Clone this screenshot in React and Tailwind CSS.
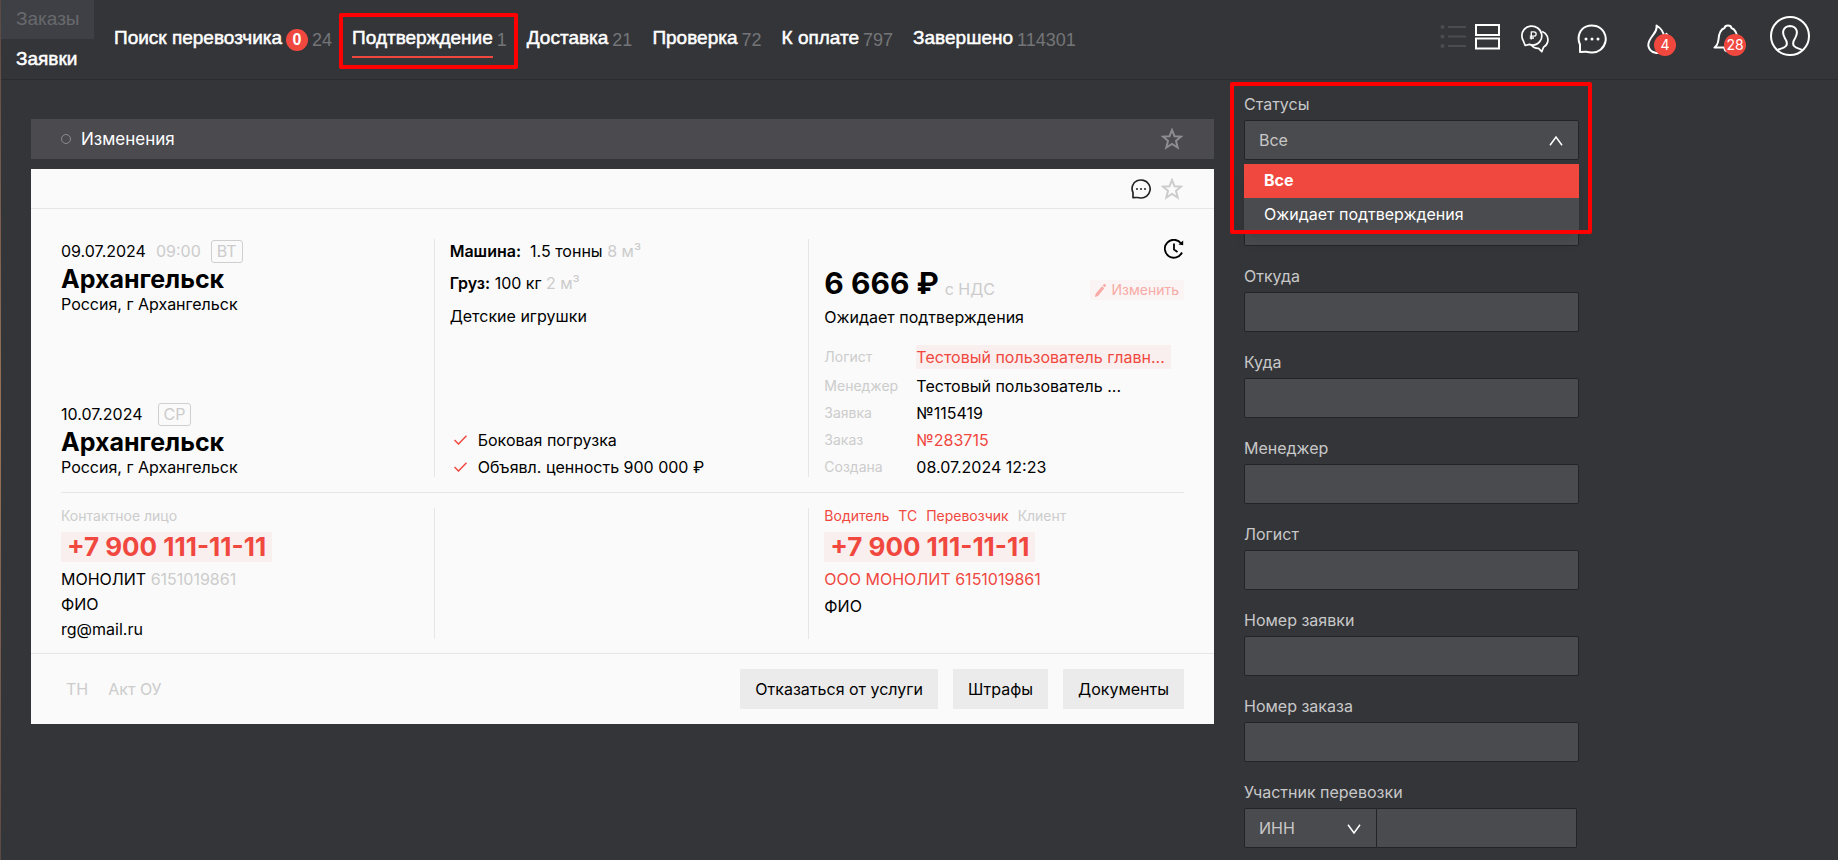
import React, { useState } from 'react';

const TABS = [
  { name: 'Поиск перевозчика', badge: 0, count: 24 },
  { name: 'Подтверждение', count: 1, active: true },
  { name: 'Доставка', count: 21 },
  { name: 'Проверка', count: 72 },
  { name: 'К оплате', count: 797 },
  { name: 'Завершено', count: 114301 },
];

const STATUSES = ['Все', 'Ожидает подтверждения'];

const FIELDS = [
  { id: 'from', label: 'Откуда' },
  { id: 'to', label: 'Куда' },
  { id: 'manager', label: 'Менеджер' },
  { id: 'logist', label: 'Логист' },
  { id: 'request', label: 'Номер заявки' },
  { id: 'order', label: 'Номер заказа' },
];

const inputClass = 'block h-10 w-full rounded-xs border border-[#232426] bg-[#4a4b4e] px-[14px] text-base text-[#c8c8c8] outline-none';
const labelClass = 'mb-1 block h-6 text-base leading-6 text-[#c8c8c8]';

function ListIcon() {
  return (
    <svg width="26" height="26" viewBox="0 0 26 26" fill="none" stroke="#4b4c50" strokeWidth="2">
      <path d="M8 3h18M8 12.500h18M8 22h18" />
      <g fill="#4b4c50" stroke="none">
        <circle cx="2.500" cy="3" r="2" />
        <circle cx="2.500" cy="12.500" r="2" />
        <circle cx="2.500" cy="22" r="2" />
      </g>
    </svg>
  );
}

function RowsIcon() {
  return (
    <svg width="25" height="26" viewBox="0 0 25 26" fill="none" stroke="#fff" strokeWidth="2">
      <path d="M1 1h23v10H1zM1 14.500h23v10H1z" />
    </svg>
  );
}

function RubleChatIcon() {
  return (
    <svg width="28" height="28" viewBox="0 0 28 28" fill="none" stroke="#fff" strokeWidth="1.700" strokeLinejoin="round">
      <path d="M2.300 15.700C.2 12.600.4 7.800 3 4.600 6.200.7 12.500-.1 16.700 3c4.600 3.300 5.300 9.500 2.200 13.400-2.600 3.300-6.700 4.300-10.400 3l-4.300 1.100z" />
      <path d="M21.200 6.500c4.200 1.600 6.500 5.900 5.500 10.300-.5 2.300-2.200 4.300-4.200 5.400l-1.700 4.400-3.200-3.300c-3.300.1-5.800-1.300-7.500-3.600" />
      <path d="M10.300 14.500V6.800h2.600c3 0 3 4.300 0 4.300H8.800M8.800 13h4.200" strokeWidth="1.300" />
    </svg>
  );
}

function ChatIcon({ size, width }) {
  return (
    <svg width={size} height={size} viewBox="0 0 30 30" fill="none" stroke="currentColor" strokeWidth={width} strokeLinejoin="round">
      <path d="M3 28V20.500C-.5 13 3 5 9 2.600 15.500 0 23 2 26.800 8c3.600 6 2 13.600-3.300 17.700-3.200 2.400-6.500 3-9 2.800-2.500 0-4.500-.5-6-.8z" />
      <g fill="currentColor" stroke="none">
        <circle cx="9" cy="15" r="1.500" />
        <circle cx="15" cy="15" r="1.500" />
        <circle cx="21" cy="15" r="1.500" />
      </g>
    </svg>
  );
}

function FireIcon() {
  return (
    <svg width="26" height="30" viewBox="0 0 26 30" fill="none" stroke="#fff" strokeWidth="2" strokeLinejoin="round">
      <path d="M9.500 1.500c1 5-2 7.500-4.500 11-2.500 3.300-4.300 6.500-3.500 10 .7 3 3 5.500 7 6.300 7 1.300 14-3 14-9.500 0-3.500-1-7-3-9.500l-2.500 4c.2-5-3-9.500-7.500-12.300z" />
    </svg>
  );
}

function BellIcon() {
  return (
    <svg width="30" height="30" viewBox="0 0 30 30" fill="none" stroke="#fff" strokeWidth="2" strokeLinejoin="round">
      <path d="M1.500 23.500c3-2 3.500-4 4-8C6 8.500 7.500 5.500 11.500 4c.5-3.500 6.500-3.500 7 0 4 1.500 5.500 4.500 6 11.500.5 4 1 6 4 8zM11.500 24c0 4.500 7 4.500 7 0" />
    </svg>
  );
}

function UserIcon() {
  return (
    <svg width="40" height="40" viewBox="0 0 40 40" fill="none" stroke="#fff" strokeWidth="2">
      <circle cx="20" cy="20" r="19" />
      <path d="M7.500 34c2-1.300 6.500-1.300 8.500-4 1.700-2.300.8-5-1.200-8-3-5-2.300-11.500 5.200-12 7.500.5 8.200 7 5.200 12-2 3-2.900 5.700-1.200 8 2 2.700 6.500 2.700 8.500 4" />
    </svg>
  );
}

function StarIcon() {
  return (
    <svg width="22" height="22" viewBox="0 0 22 22" fill="none" stroke="currentColor" strokeWidth="2">
      <path d="M11 2l2.500 6.200 6.600.4-5.100 4.200 1.700 6.700L11 15.900l-5.700 3.600L7 12.800 1.900 8.600l6.600-.4z" />
    </svg>
  );
}

function HistoryIcon() {
  return (
    <svg width="20" height="20" viewBox="0 0 20 20" fill="none" stroke="#000" strokeWidth="1.800">
      <path d="M18 13.500A9 9 0 1 1 17 4.300M10 4.500v6l3.500 2.500" />
      <path d="M14.500 5.500l4.700.7V1.600z" fill="#000" stroke="none" />
    </svg>
  );
}

function PencilIcon() {
  return (
    <svg width="11" height="13" viewBox="0 0 11 13" fill="currentColor">
      <path d="M7 2.300l2.300 2L3 12l-3 1 .6-3.300zM7.700 1.500L8.700.3c.4-.4 1-.4 1.500 0l.5.5c.4.4.4 1 0 1.500l-.8 1z" />
    </svg>
  );
}

function Chevron({ up }) {
  return (
    <svg className="pointer-events-none absolute right-4 top-4" width="14" height="10" viewBox="0 0 14 10" fill="none" stroke="#fff" strokeWidth="1.500">
      <path d={up ? 'M1 9.300L7 1l6 8.300' : 'M1 .7L7 9l6-8.300'} />
    </svg>
  );
}

function Check({ children }) {
  return (
    <li className="flex items-center gap-[11px] pl-1 leading-5">
      <svg width="13" height="10" viewBox="0 0 13 10" fill="none" stroke="#f0483f" strokeWidth="1.500">
        <path d="M.5 5l4 4L12.500.7" />
      </svg>
      {children}
    </li>
  );
}

function Point({ date, time, day }) {
  return (
    <div>
      <div className="flex h-6 items-center">
        <span>{date}</span>
        {time && <span className="ml-[10px] text-[#cccccc]">{time}</span>}
        <span className={`flex h-[23px] items-center rounded-[3px] border border-[#cfcfcf] px-[5px] text-[#cccccc] ${time ? 'ml-[10px]' : 'ml-[15px]'}`}>{day}</span>
      </div>
      <h3 className="text-[25px] leading-8 font-bold">Архангельск</h3>
      <p className="leading-[19px]">Россия, г Архангельск</p>
    </div>
  );
}

function Phone() {
  return (
    <a href="tel:+79001111111" className="mt-1 block w-fit bg-[#f9efee] px-[6px] text-[26px] leading-[30px] font-bold text-[#f0483f]">
      +7 900 111-11-11
    </a>
  );
}

// outline drawn over a part of the screen to point it out
function Marker({ className }) {
  return <div className={`pointer-events-none absolute z-20 rounded-xs border-4 border-[#ff0000] ${className}`} />;
}

function Header() {
  return (
    <header className="flex h-20 items-center border-b border-[#2b2c2f] font-['Liberation_Sans',Arial,sans-serif] text-[19px]">
      <nav className="w-[93px] self-stretch">
        <a href="#orders" className="flex h-[39px] items-center bg-[#3f4045] pl-[15px] text-[#68696d]">Заказы</a>
        <a href="#requests" className="flex h-10 items-center pl-[15px] text-white [-webkit-text-stroke:0.5px_white]">Заявки</a>
      </nav>
      <nav className="flex h-full flex-1 gap-5 pl-5">
        {TABS.map((tab) => (
          <a key={tab.name} href="#tab" className="relative flex items-center gap-1 whitespace-nowrap">
            <span className={`flex h-[37px] items-center border-b-2 text-white [-webkit-text-stroke:0.5px_white] ${tab.active ? 'border-[#f0483f]' : 'border-transparent'}`}>{tab.name}</span>
            {tab.badge !== undefined && (
              <span className="flex size-[22px] items-center justify-center rounded-full bg-[#f0483f] text-base font-bold text-white">{tab.badge}</span>
            )}
            <span className="text-lg text-[#747578]">{tab.count}</span>
            {tab.active && <Marker className="-left-[13px] -right-[11px] top-[13px] h-[56px]" />}
          </a>
        ))}
      </nav>
      <div className="flex items-center pr-7 text-white">
        <button aria-label="Список" className="mr-[9px] pb-[6px]"><ListIcon /></button>
        <button aria-label="Карточки" className="mr-[21px] pb-[6px]"><RowsIcon /></button>
        <button aria-label="Ставки" className="mr-7 pb-[2px]"><RubleChatIcon /></button>
        <button aria-label="Сообщения" className="mr-10 pb-[2px]"><ChatIcon size={30} width={2} /></button>
        <button aria-label="Срочные" className="relative mr-10 pb-[2px]">
          <FireIcon />
          <span className="absolute left-[7px] top-[10px] flex size-[22px] items-center justify-center rounded-full bg-[#f0483f] font-['Inter',sans-serif] text-sm">4</span>
        </button>
        <button aria-label="Уведомления" className="relative mr-[27px] pb-[2px]">
          <BellIcon />
          <span className="absolute left-[11px] top-[10px] flex size-[22px] items-center justify-center rounded-full bg-[#f0483f] font-['Inter',sans-serif] text-sm">28</span>
        </button>
        <button aria-label="Профиль" className="pb-2"><UserIcon /></button>
      </div>
    </header>
  );
}

function Details() {
  const rows = [
    ['Логист', <a href="#logist" className="block bg-[#f9efee] pr-[6px] leading-6 text-[#f0483f]">Тестовый пользователь главн...</a>],
    ['Менеджер', 'Тестовый пользователь ...'],
    ['Заявка', '№115419'],
    ['Заказ', <a href="#order" className="text-[#f0483f]">№283715</a>],
    ['Создана', '08.07.2024 12:23'],
  ];
  return (
    <dl className="grid grid-cols-[92px_max-content] items-center gap-y-[7px] leading-5">
      {rows.map(([name, value]) => (
        <React.Fragment key={name}>
          <dt className="text-sm text-[#cccccc]">{name}</dt>
          <dd>{value}</dd>
        </React.Fragment>
      ))}
    </dl>
  );
}

function Card() {
  return (
    <article className="mt-[10px] bg-[#fafafa] text-base text-black">
      <div className="flex h-10 items-center justify-end gap-[10px] border-b border-[#e6e6e6] pr-[31px]">
        <button aria-label="Комментарии" className="text-[#222]"><ChatIcon size={20} width={2.5} /></button>
        <button aria-label="В избранное" className="text-[#cccccc]"><StarIcon /></button>
      </div>

      <div className="px-[30px]">
        <div className="grid grid-cols-[373fr_375fr_376fr] border-b border-[#e6e6e6] pt-[30px] pb-[15px]">
          <section className="flex h-[238px] flex-col justify-between">
            <Point date="09.07.2024" time="09:00" day="ВТ" />
            <Point date="10.07.2024" day="СР" />
          </section>

          <section className="flex flex-col justify-between border-l border-[#e6e6e6] pl-[15px]">
            <div>
              <p className="h-8"><b className="font-semibold">Машина:</b>&nbsp; 1.5 тонны <span className="text-[#cccccc]">8 м³</span></p>
              <p className="h-[33px]"><b className="font-semibold">Груз:</b> 100 кг <span className="text-[#cccccc]">2 м³</span></p>
              <p>Детские игрушки</p>
            </div>
            <ul className="flex flex-col gap-[7px]">
              <Check>Боковая погрузка</Check>
              <Check>Объявл. ценность 900 000 ₽</Check>
            </ul>
          </section>

          <section className="flex flex-col justify-between border-l border-[#e6e6e6] pl-[15px]">
            <div>
              <button aria-label="История" className="ml-auto block h-5"><HistoryIcon /></button>
              <div className="flex items-end">
                <span className="text-3xl leading-[48px] font-bold">6 666 ₽</span>
                <span className="ml-[6px] pb-[6px] text-[#cccccc]">с НДС</span>
                <button className="mb-[7px] ml-auto flex h-5 items-center gap-[5px] bg-[#faf5f4] px-[5px] text-sm text-[#f7aaa6]">
                  <PencilIcon />Изменить
                </button>
              </div>
              <p className="leading-5">Ожидает подтверждения</p>
            </div>
            <Details />
          </section>
        </div>

        <div className="grid grid-cols-[373fr_375fr_376fr] pt-[15px] pb-[14px]">
          <section className="h-[131px]">
            <p className="h-5 text-sm leading-4 text-[#cccccc]">Контактное лицо</p>
            <Phone />
            <p className="mt-[5px] leading-[25px]">МОНОЛИТ <span className="text-[#cccccc]">6151019861</span></p>
            <p className="leading-[25px]">ФИО</p>
            <a href="mailto:rg@mail.ru" className="leading-[25px]">rg@mail.ru</a>
          </section>
          <section className="border-l border-[#e6e6e6]" />
          <section className="border-l border-[#e6e6e6] pl-[15px]">
            <div className="flex h-5 gap-[9px] text-sm leading-4 text-[#f0483f]">
              <a href="#driver">Водитель</a>
              <a href="#vehicle">ТС</a>
              <a href="#carrier">Перевозчик</a>
              <span className="text-[#cccccc]">Клиент</span>
            </div>
            <Phone />
            <a href="#company" className="mt-[5px] block leading-[25px] text-[#f0483f]">ООО МОНОЛИТ 6151019861</a>
            <p className="mt-[2px] leading-[25px]">ФИО</p>
          </section>
        </div>
      </div>

      <footer className="flex h-[71px] items-center gap-[15px] border-t border-[#e6e6e6] px-[30px]">
        <div className="flex flex-1 gap-5 pl-[5px] text-[#cccccc]">
          <span>ТН</span>
          <span>Акт ОУ</span>
        </div>
        <button className="h-10 bg-[#ebebeb] px-[15px]">Отказаться от услуги</button>
        <button className="h-10 bg-[#ebebeb] px-[15px]">Штрафы</button>
        <button className="h-10 bg-[#ebebeb] px-[15px]">Документы</button>
      </footer>
    </article>
  );
}

function Filters() {
  const [open, setOpen] = useState(true);
  const [status, setStatus] = useState('Все');

  const pick = (value) => {
    setStatus(value);
    setOpen(false);
  };

  return (
    <form className="flex w-[335px] flex-col gap-[18px] pt-3">
      <div className="relative">
        <label htmlFor="status" className={labelClass}>Статусы</label>
        <div className="relative">
          <select
            id="status"
            value={status}
            onChange={(e) => setStatus(e.target.value)}
            onMouseDown={(e) => {
              e.preventDefault();
              setOpen(!open);
            }}
            className={`${inputClass} appearance-none`}>
            {STATUSES.map((s) => <option key={s}>{s}</option>)}
          </select>
          <Chevron up={open} />
        </div>
        {open && (
          <ul role="listbox" className="absolute inset-x-0 top-[72px] z-10 bg-[#4a4b4e] text-base text-white shadow-lg">
            {STATUSES.map((s) => (
              <li
                key={s}
                role="option"
                aria-selected={s === status}
                onClick={() => pick(s)}
                className={`h-[34px] px-5 leading-8 ${s === status ? 'bg-[#f0483f] font-bold' : ''}`}>
                {s}
              </li>
            ))}
          </ul>
        )}
        <Marker className="-left-[14px] -right-[13px] -top-[10px] h-[152px]" />
      </div>
      <input aria-label="Фильтр" className={`${inputClass} mt-7`} />
      {FIELDS.map((field) => (
        <div key={field.id}>
          <label htmlFor={field.id} className={labelClass}>{field.label}</label>
          <input id={field.id} className={inputClass} />
        </div>
      ))}
      <div>
        <label htmlFor="member" className={labelClass}>Участник перевозки</label>
        <div className="flex pr-[2px]">
          <div className="relative w-[133px] shrink-0">
            <select id="member-type" aria-label="Тип участника" className={`${inputClass} appearance-none rounded-r-none`}>
              <option>ИНН</option>
            </select>
            <Chevron />
          </div>
          <input id="member" className={`${inputClass} rounded-l-none border-l-0`} />
        </div>
      </div>
    </form>
  );
}

export default function App() {
  return (
    <div className="flex min-h-screen bg-[#343539] font-['Inter','Noto_Sans',sans-serif]">
      <div className="w-px bg-linear-to-b from-[#5a4a44] via-[#9a7458] to-[#5a4a44]" />
      <div className="min-w-0 flex-1">
        <Header />
        <div className="flex gap-[30px] pl-[30px] pr-[259px]">
          <main className="min-w-0 flex-1 pt-[39px]">
            <div className="flex h-10 items-center bg-[#4b4a4f] pl-[30px] pr-[31px] text-white">
              <span className="size-[10px] rounded-full border border-[#8b8b8e]" />
              <h2 className="flex-1 pt-[2px] pl-[10px] text-[17px] font-normal">Изменения</h2>
              <button aria-label="В избранное" className="text-[#8d8d90]"><StarIcon /></button>
            </div>
            <Card />
          </main>
          <Filters />
        </div>
      </div>
    </div>
  );
}
